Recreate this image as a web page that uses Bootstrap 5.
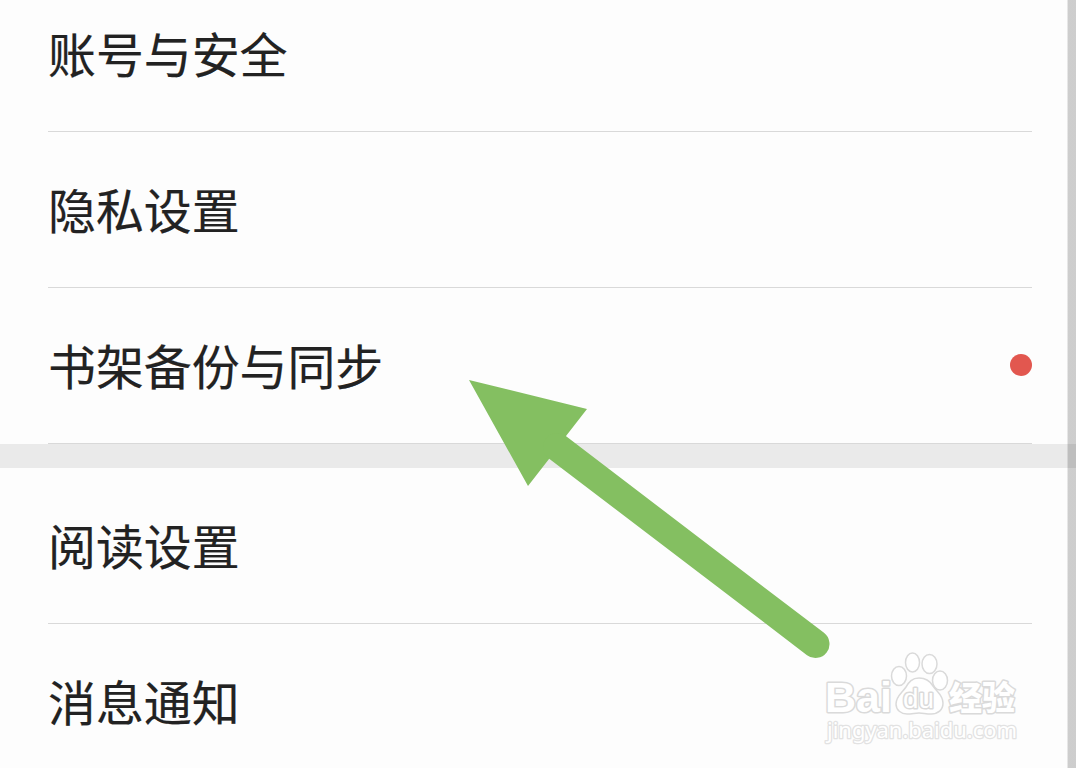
<!DOCTYPE html>
<html lang="zh-CN">
<head>
    <meta charset="UTF-8">
    <meta name="viewport" content="width=device-width, initial-scale=1.0">
    <title>设置</title>
    <link href="https://cdn.jsdelivr.net/npm/bootstrap@5.3.0/dist/css/bootstrap.min.css" rel="stylesheet">
    <style>
        body {
            background: #fdfdfd;
            color: #222;
            font-family: "Noto Sans CJK SC", sans-serif;
        }
        .screen { height: 768px; }
        /* the list is scrolled a little, first row starts above the window */
        .settings { margin-top: -24px; }
        .settings-group { padding: 0 44px 0 48px; }
        .settings-item {
            height: 156px;
            padding-bottom: 2px;
            border-bottom: 1px solid #d9d9d9;
            font-size: 47.900px;
            line-height: 1;
            -webkit-text-stroke: .2px #222;
        }
        .group-gap { height: 24px; background: #eaeaea; }
        .dot { width: 22px; height: 22px; margin-top: 1px; background: #e2574f; }
        .scroll-track {
            width: 9px;
            background: linear-gradient(90deg, rgba(0, 0, 0, .09) 1px, rgba(0, 0, 0, .19) 1px);
        }
    </style>
</head>

<body>
    <div class="screen position-relative overflow-hidden">
        <main class="settings">
            <section class="settings-group">
                <div class="settings-item d-flex align-items-center">账号与安全</div>
                <div class="settings-item d-flex align-items-center">隐私设置</div>
                <div class="settings-item d-flex align-items-center justify-content-between">
                    <span>书架备份与同步</span>
                    <span class="dot rounded-circle"></span>
                </div>
            </section>
            <div class="group-gap"></div>
            <section class="settings-group">
                <div class="settings-item d-flex align-items-center">阅读设置</div>
                <div class="settings-item d-flex align-items-center">消息通知</div>
            </section>
        </main>

        <div class="scroll-track position-absolute top-0 end-0 h-100"></div>

        <!-- arrow and watermark on top of the list -->
        <svg class="position-absolute top-0 start-0 pe-none" width="1076" height="768" viewBox="0 0 1076 768">
            <path d="M469 380 587 409 566 436 549 459 528 486Z" fill="#84bf61"/>
            <path d="M557 447 815.500 644" stroke="#84bf61" stroke-width="28" stroke-linecap="round"/>

            <g fill="#fff" stroke="#dadada" stroke-width="2" stroke-linejoin="round">
                <g stroke-width="1.500">
                    <ellipse cx="899" cy="676" rx="7.500" ry="9.500"/>
                    <ellipse cx="912.500" cy="662.500" rx="7" ry="9.500"/>
                    <ellipse cx="929.500" cy="664" rx="7.500" ry="9.500"/>
                    <ellipse cx="940" cy="680.500" rx="7.500" ry="9.500"/>
                    <path d="M919 678c-7 0-10 4-13 9-4 6-10 9-10 17 0 6 5 10 11 10 5 0 8-1 12-1s7 1 12 1c7 0 12-4 12-11 0-8-6-11-10-17-3-5-7-8-14-8Z"/>
                </g>
                <g paint-order="stroke" font-family="'Liberation Sans', sans-serif">
                    <text x="825" y="711.500" font-size="42" font-weight="700" textLength="67" lengthAdjust="spacingAndGlyphs" stroke-width="3">Bai</text>
                    <text x="903" y="708" font-size="27" textLength="31" lengthAdjust="spacingAndGlyphs" stroke-width="3">du</text>
                    <text x="949" y="710" font-size="33" font-weight="900" textLength="66" lengthAdjust="spacingAndGlyphs" stroke-width="3" font-family="'Noto Sans CJK SC', sans-serif">经验</text>
                    <text x="827" y="738" font-size="21" textLength="190" lengthAdjust="spacingAndGlyphs" font-family="'Noto Sans', sans-serif" stroke="#e2e2e2" stroke-width="2.500">jingyan.baidu.com</text>
                </g>
            </g>
        </svg>
    </div>

    <script src="https://cdn.jsdelivr.net/npm/bootstrap@5.3.0/dist/js/bootstrap.bundle.min.js"></script>
</body>
</html>
